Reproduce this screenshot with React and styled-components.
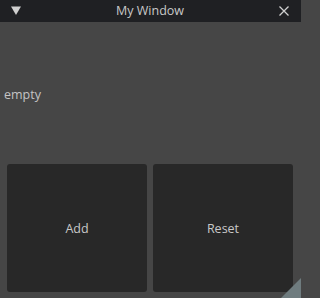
import React from 'react'
import styled, { createGlobalStyle } from 'styled-components'

const Global = createGlobalStyle`
  html, body {
    margin: 0;
    padding: 0;
    background: #464646;
  }
  body {
    width: 301px;
    height: 298px;
    overflow: hidden;
    font-family: "Open Sans", "Noto Sans", sans-serif;
  }
`

const Window = styled.div`
  position: relative;
  width: 301px;
  height: 298px;
  display: flex;
  flex-direction: column;
  background: #464646;
`

const TitleBar = styled.div`
  height: 22px;
  flex-shrink: 0;
  display: flex;
  align-items: center;
  justify-content: space-between;
  padding: 0 12px 0 11px;
  background: #1f2023;
  color: #c8c8c8;
`

const Title = styled.span`
  font-size: 12.5px;
  line-height: 22px;
`

const IconButton = styled.span`
  display: flex;
  width: 10px;
  height: 10px;
`

const Body = styled.div`
  flex: 1;
  display: flex;
  flex-direction: column;
  padding: 0 8px 6px 0;
`

const LabelArea = styled.div`
  flex: 1;
  display: flex;
  align-items: center;
  padding-left: 4px;
  padding-top: 3px;
  color: #c4c4c4;
  font-size: 12.5px;
`

const ButtonRow = styled.div`
  height: 128px;
  display: grid;
  grid-template-columns: 1fr 1fr;
  gap: 6px;
  padding-left: 7px;
`

const Button = styled.button`
  border: none;
  border-radius: 3px;
  background: #282828;
  color: #c8c8c8;
  font-family: inherit;
  font-size: 12.5px;
  padding: 0;
`

const Corner = styled.svg`
  position: absolute;
  right: 0;
  bottom: 0;
`

export default function App() {
  return (
    <>
      <Global />
      <Window>
        <TitleBar>
          <IconButton>
            <svg width="10" height="10" viewBox="0 0 10 10">
              <polygon points="0,0.5 10,0.5 5,9" fill="#d0d0d0" />
            </svg>
          </IconButton>
          <Title>My Window</Title>
          <IconButton>
            <svg width="10" height="10" viewBox="0 0 10 10">
              <path d="M0.5 0.5 L9.5 9.5 M9.5 0.5 L0.5 9.5" stroke="#d0d0d0" strokeWidth="1.3" />
            </svg>
          </IconButton>
        </TitleBar>
        <Body>
          <LabelArea>empty</LabelArea>
          <ButtonRow>
            <Button>Add</Button>
            <Button>Reset</Button>
          </ButtonRow>
        </Body>
        <Corner width="20" height="20" viewBox="0 0 20 20">
          <polygon points="0,20 20,0 20,20" fill="#6f7c7f" />
        </Corner>
      </Window>
    </>
  )
}
